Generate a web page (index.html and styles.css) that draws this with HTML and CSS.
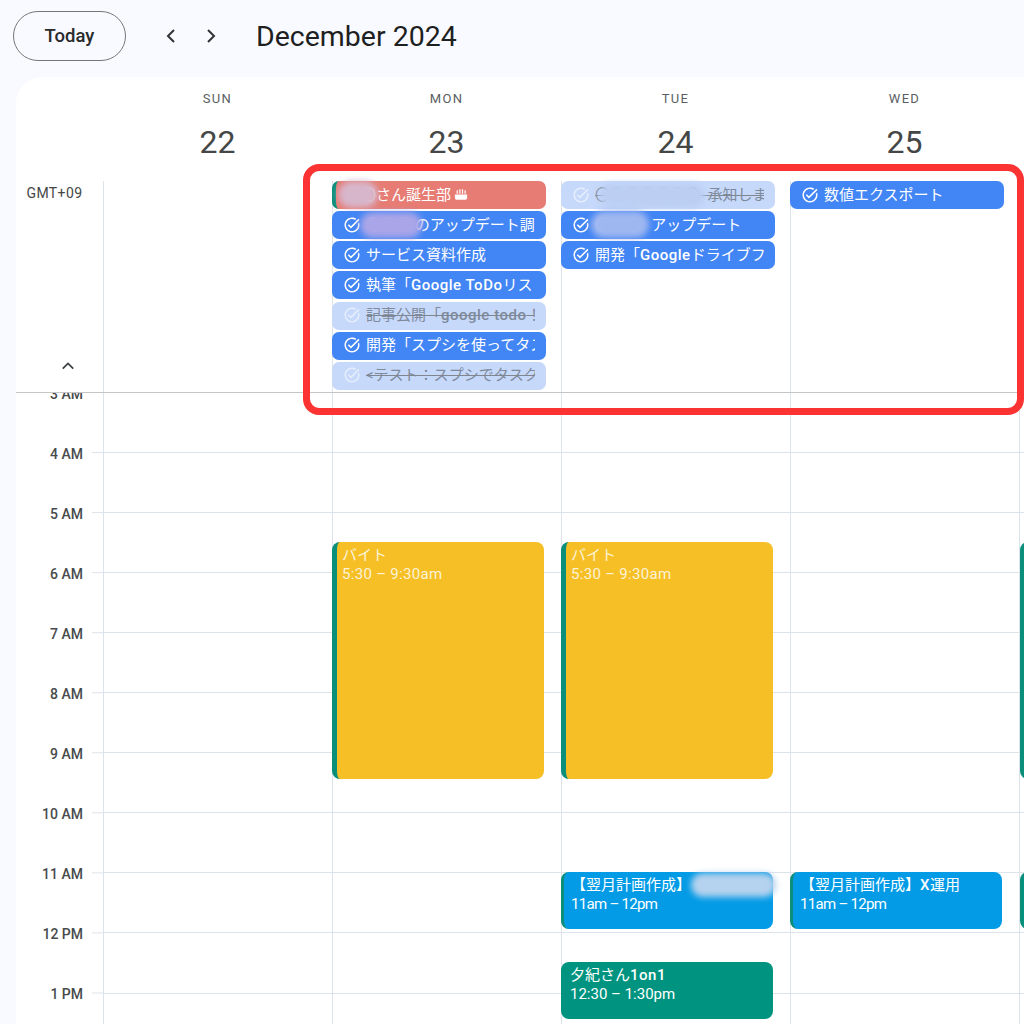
FILE: index.html
```html
<!DOCTYPE html>
<html lang="ja">
<head>
<meta charset="utf-8">
<title>December 2024</title>
<link rel="stylesheet" href="styles.css">
</head>
<body>
<svg class="defs" aria-hidden="true"><symbol id="task" viewBox="0 0 24 24"><path d="M22 5.18 10.59 16.6l-4.24-4.24 1.41-1.41 2.83 2.83 10-10L22 5.18zM19.79 10.22c.13.57.21 1.17.21 1.78 0 4.42-3.58 8-8 8s-8-3.58-8-8 3.58-8 8-8c1.58 0 3.04.46 4.28 1.25l1.44-1.44C16.1 2.67 14.13 2 12 2 6.48 2 2 6.48 2 12s4.48 10 10 10 10-4.48 10-10c0-1.19-.22-2.33-.6-3.39l-1.61 1.61z"/></symbol></svg>
<header class="toolbar">
  <button class="today">Today</button>
  <nav class="arrows">
    <svg class="arrow" viewBox="0 0 14 16"><path d="M10 2 4 8l6 6"/></svg>
    <svg class="arrow" viewBox="0 0 14 16"><path d="m4 2 6 6-6 6"/></svg>
  </nav>
  <h1 class="title">December 2024</h1>
</header>
<main class="card">
  <div class="row head">
    <div></div>
    <div class="dayhead"><span class="dow">SUN</span><span class="date">22</span></div>
    <div class="dayhead"><span class="dow">MON</span><span class="date">23</span></div>
    <div class="dayhead"><span class="dow">TUE</span><span class="date">24</span></div>
    <div class="dayhead"><span class="dow">WED</span><span class="date">25</span></div>
    <div></div>
  </div>
  <div class="row allday">
    <div class="allday-gutter">
      <span class="tz">GMT+09</span>
      <svg class="collapse" viewBox="0 0 16 10"><path d="m2 8 6-6 6 6"/></svg>
    </div>
    <div class="allday-col"></div>
    <div class="allday-col">
      <div class="chip birthday"><span class="label">〇〇さん誕生部</span><svg class="cake" viewBox="0 0 16 14"><path d="M1 7h14v4a2 2 0 0 1-2 2H3a2 2 0 0 1-2-2z"/><path d="M3 2h1.4v4H3zM6 1h1.4v5H6zM9 1h1.4v5H9zM12 2h1.4v4H12z"/></svg><i class="blur blur-a"></i></div>
      <div class="chip"><svg class="check"><use href="#task"/></svg><span class="label">〇〇〇&nbsp;のアップデート調整</span><i class="blur blur-b"></i></div>
      <div class="chip"><svg class="check"><use href="#task"/></svg><span class="label">サービス資料作成</span></div>
      <div class="chip"><svg class="check"><use href="#task"/></svg><span class="label">執筆「<b>Google ToDo</b>リスト」</span></div>
      <div class="chip done"><svg class="check"><use href="#task"/></svg><span class="label">記事公開「<b>google todo</b>！」</span></div>
      <div class="chip"><svg class="check"><use href="#task"/></svg><span class="label">開発「スプシを使ってタスク管理」</span></div>
      <div class="chip done"><svg class="check"><use href="#task"/></svg><span class="label">&lt;テスト：スプシでタスク管理</span></div>
    </div>
    <div class="allday-col">
      <div class="chip done"><svg class="check"><use href="#task"/></svg><span class="label">〇〇〇〇〇〇〇&nbsp;&nbsp;承知しま</span><i class="blur blur-c"></i></div>
      <div class="chip"><svg class="check"><use href="#task"/></svg><span class="label">〇〇〇&nbsp;&nbsp;&nbsp;アップデート</span><i class="blur blur-d"></i></div>
      <div class="chip"><svg class="check"><use href="#task"/></svg><span class="label">開発「<b>Google</b>ドライブフォルダ」</span></div>
    </div>
    <div class="allday-col">
      <div class="chip"><svg class="check"><use href="#task"/></svg><span class="label">数値エクスポート</span></div>
    </div>
    <div class="allday-col"></div>
  </div>
  <div class="row timegrid">
    <div class="gutter">
      <div class="hour">3 AM</div>
      <div class="hour">4 AM</div>
      <div class="hour">5 AM</div>
      <div class="hour">6 AM</div>
      <div class="hour">7 AM</div>
      <div class="hour">8 AM</div>
      <div class="hour">9 AM</div>
      <div class="hour">10 AM</div>
      <div class="hour">11 AM</div>
      <div class="hour">12 PM</div>
      <div class="hour">1 PM</div>
    </div>
    <div class="daycol"></div>
    <div class="daycol">
      <div class="event shift"><span class="ev-title">バイト</span><span class="wide">5:30 – 9:30am</span></div>
    </div>
    <div class="daycol">
      <div class="event shift"><span class="ev-title">バイト</span><span class="wide">5:30 – 9:30am</span></div>
      <div class="event plan"><span class="ev-title">【翌月計画作成】</span><span class="tight">11am – 12pm</span><i class="blur blur-e"></i></div>
      <div class="event oneonone"><span class="ev-title">夕紀さん<b>1on1</b></span><span>12:30 – 1:30pm</span></div>
    </div>
    <div class="daycol">
      <div class="event plan"><span class="ev-title">【翌月計画作成】<b>X</b>運用</span><span class="tight">11am – 12pm</span></div>
    </div>
    <div class="daycol">
      <div class="event shift stub"></div>
      <div class="event plan stub stub-teal"></div>
    </div>
  </div>
</main>
<div class="highlight"></div>
</body>
</html>
```
FILE: styles.css
```css
* { box-sizing: border-box; }
html, body { margin: 0; height: 1024px; }
body {
  width: 1024px;
  overflow: hidden;
  display: flex;
  flex-direction: column;
  background: #f8faff;
  color: #1f1f1f;
  font-family: Roboto, "Noto Sans CJK JP", sans-serif;
  font-size: 15px;
}
.defs { display: none; }

.toolbar {
  height: 77px;
  flex: none;
  display: flex;
  align-items: center;
  padding: 0 0 5px 13px;
}
.today {
  width: 113px;
  height: 50px;
  border: 1px solid #747775;
  border-radius: 25px;
  background: transparent;
  color: #2a2b2c;
  font: 500 18.5px Roboto, sans-serif;
}
.arrows { display: flex; gap: 26px; margin-left: 38px; }
.arrow { width: 14px; height: 16px; fill: none; stroke: #303335; stroke-width: 2; }
.title { margin: 0 0 0 38px; font: 400 28.5px Roboto, sans-serif; color: #1f1f1f; }

.card {
  flex: 1;
  min-height: 0;
  margin-left: 16px;
  background: #fff;
  border-top-left-radius: 26px;
  display: flex;
  flex-direction: column;
  overflow: hidden;
}
.row { display: grid; grid-template-columns: 87px repeat(4, 229px) 1fr; flex: none; }

.head { height: 104px; }
.dayhead { display: flex; flex-direction: column; align-items: center; padding-top: 13px; }
.dow { font-size: 13px; line-height: 17px; letter-spacing: 1.3px; color: #5a5e62; }
.date { margin-top: 15px; font-size: 32px; line-height: 40px; color: #444746; }

.allday { height: 212px; border-bottom: 1px solid #c4c7c5; }
.allday-gutter { position: relative; text-align: center; font-size: 14px; color: #444746; }
.tz { display: block; margin-left: 10px; width: 57px; line-height: 24px; white-space: nowrap; letter-spacing: .4px; }
.collapse { position: absolute; left: 45px; top: 180px; width: 14px; height: 10px; fill: none; stroke: #3c4043; stroke-width: 2; }
.allday-col {
  border-left: 1px solid #dde3ea;
  display: flex;
  flex-direction: column;
  gap: 2.15px;
}
.chip {
  position: relative;
  width: 214px;
  height: 28px;
  flex: none;
  margin-left: -1px;
  display: flex;
  align-items: center;
  padding: 0 11px 1px 11px;
  border-radius: 7px;
  background: #4285f4;
  color: #fff;
  white-space: nowrap;
}
.check { width: 18px; height: 18px; flex: none; fill: #fff; margin-right: 5px; }
.label { flex: 1; min-width: 0; overflow: hidden; line-height: 20px; }
.label b, .ev-title b { font-weight: 500; letter-spacing: .5px; }
.done { background: #c6d9fb; color: #7f8a9c; }
.done .label { text-decoration: line-through; text-decoration-color: #80868f; }
.done .check { fill: #e6eefd; }
.birthday { background: #e67c73; border-left: 4px solid #0b8f7b; padding-left: 10px; }
.birthday .label { flex: none; }
.cake { width: 14px; height: 13px; margin-left: 3px; fill: #fff; flex: none; }

.blur { position: absolute; filter: blur(3px); border-radius: 14px; }
.blur-a { left: 2px; top: 0; width: 40px; height: 27px; background: #d7b6cb; }
.blur-b { left: 28px; top: 1px; width: 62px; height: 26px; background: #a9a5e8; }
.blur-c { left: 38px; top: 2px; width: 106px; height: 25px; background: #bccff3; }
.blur-d { left: 30px; top: 0; width: 58px; height: 27px; background: #9fb7f0; }
.blur-e { left: 127px; top: 1px; width: 85px; height: 24px; background: #b5d2ee; }

.timegrid { flex: 1; min-height: 0; }
.gutter {
  overflow: hidden;
  background: linear-gradient(#dde3ea 0 1px, transparent 1px) right top 59.05px / 11px 60.05px repeat-y;
  color: #484b4d;
  font-size: 14px;
  font-weight: 500;
}
.hour {
  height: 60.05px;
  line-height: 18px;
  width: 67px;
  text-align: right;
  position: relative;
  top: -8px;
}
.daycol {
  position: relative;
  border-left: 1px solid #dde3ea;
  background: repeating-linear-gradient(#fff 0, #fff 59.05px, #dde3ea 59.05px, #dde3ea 60.05px);
}
.event {
  position: absolute;
  left: -1px;
  width: 212px;
  display: flex;
  flex-direction: column;
  padding: 4px 6px 0 9px;
  border-radius: 8px;
  color: #fff;
  line-height: 19px;
  white-space: nowrap;
}
.ev-title { display: block; }
.tight { letter-spacing: -.7px; }
.wide { letter-spacing: .3px; }
.shift { top: 149px; height: 237px; background: #f6bf26; border-left: 5px solid #0b8f7b; padding-left: 5px; color: #fdf3d6; }
.plan { top: 479px; height: 57px; background: #039be5; border-left: 3px solid #0b8f7b; padding-left: 7px; }
.oneonone { top: 569px; height: 57px; background: #009480; }
.stub { left: 0; }
.stub-teal { background: #009480; }

.highlight {
  position: absolute;
  left: 303px;
  top: 164px;
  width: 721px;
  height: 251px;
  border: 7px solid #fb3333;
  border-radius: 16px;
}
```
